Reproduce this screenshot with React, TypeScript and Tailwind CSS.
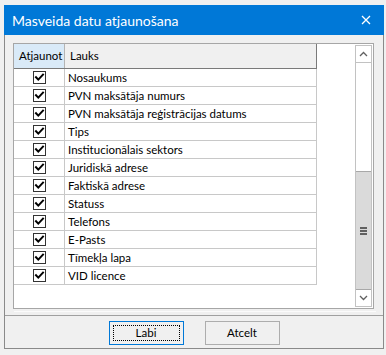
import React from "react";

const rows = [
  "Nosaukums",
  "PVN maksātāja numurs",
  "PVN maksātāja reģistrācijas datums",
  "Tips",
  "Institucionālais sektors",
  "Juridiskā adrese",
  "Faktiskā adrese",
  "Statuss",
  "Telefons",
  "E-Pasts",
  "Tīmekļa lapa",
  "VID licence",
];

function Check() {
  return (
    <div className="w-[13px] h-[13px] border border-[#333333] bg-white flex items-center justify-center">
      <svg width="11" height="11" viewBox="0 0 11 11">
        <path d="M2 5.2 L4.3 7.6 L9 2.6" fill="none" stroke="#000" strokeWidth="2" strokeLinecap="square" />
      </svg>
    </div>
  );
}

export default function App() {
  return (
    <div className="w-[386px] h-[355px] bg-[#f0f0f0] pt-[5px] pl-[4px] text-[11.5px] text-black font-['Lato','Noto_Sans',sans-serif]">
      <div className="w-[380px] h-[344px] flex flex-col">
        <div className="h-[30px] bg-[#0078d7] flex items-center justify-between pl-[8px] pr-[13px] text-white text-[14px]">
          <span className="leading-none pt-[1px]">Masveida datu atjaunošana</span>
          <svg width="10" height="10" viewBox="0 0 10 10">
            <path d="M1 1 L9 9 M9 1 L1 9" stroke="#fff" strokeWidth="1.3" />
          </svg>
        </div>
        <div className="flex-1 flex flex-col border-x border-b border-[#8a8a8a] bg-[#f0f0f0]">
          <div className="pt-[8px] pl-[8px]">
            <div className="w-[361px] h-[266px] border border-[#a6a6a6] bg-white flex">
              <div className="w-[303px] flex flex-col">
                <div className="h-[25px] flex border-b border-[#7a7a7a]">
                  <div className="w-[51px] bg-[#d9eaf8] border-r border-[#b4b4b4] flex items-center pl-[5px] whitespace-nowrap overflow-hidden">Atjaunot</div>
                  <div className="w-[252px] bg-[#f0f0f0] border-r border-[#7a7a7a] flex items-center pl-[5px]">Lauks</div>
                </div>
                {rows.map((r) => (
                  <div key={r} className="h-[18px] flex border-b border-[#c8c8c8]">
                    <div className="w-[51px] border-r border-[#c8c8c8] flex items-center justify-center pl-[1px]">
                      <Check />
                    </div>
                    <div className="w-[252px] border-r border-[#c8c8c8] flex items-center pl-[3px] leading-none">{r}</div>
                  </div>
                ))}
              </div>
              <div className="flex-1" />
              <div className="w-[17px] my-[1px] mr-[1px] border border-[#c2c2c2] flex flex-col">
                <div className="h-[17px] border-b border-[#c2c2c2] flex items-center justify-center">
                  <svg width="9" height="6" viewBox="0 0 9 6">
                    <path d="M1 5 L4.5 1.5 L8 5" fill="none" stroke="#606060" strokeWidth="1.3" />
                  </svg>
                </div>
                <div className="h-[108px] bg-white" />
                <div className="flex-1 bg-[#dadada] border-y border-[#a8a8a8] flex items-center justify-center">
                  <div className="flex flex-col gap-[1px]">
                    <div className="w-[7px] h-[2px] bg-[#606060]" />
                    <div className="w-[7px] h-[2px] bg-[#606060]" />
                    <div className="w-[7px] h-[2px] bg-[#606060]" />
                  </div>
                </div>
                <div className="h-[16px] flex items-center justify-center bg-white">
                  <svg width="9" height="6" viewBox="0 0 9 6">
                    <path d="M1 1 L4.5 4.5 L8 1" fill="none" stroke="#606060" strokeWidth="1.3" />
                  </svg>
                </div>
              </div>
            </div>
          </div>
          <div className="h-[6px] pl-[9px] pt-[2px]">
            <div className="h-[1px] w-[362px] bg-[#fbfbfb]" />
          </div>
          <div className="flex-1 border-t border-[#a0a0a0] flex justify-center gap-[21px] pt-[5px]">
            <div className="w-[75px] h-[24px] border border-[#0078d7] bg-[#f0f0f0] p-[3px]">
              <div className="w-full h-full border border-dotted border-black flex items-center justify-center leading-none">
                Labi
              </div>
            </div>
            <div className="w-[75px] h-[24px] border border-[#adadad] bg-[#f0f0f0] flex items-center justify-center leading-none">
              Atcelt
            </div>
          </div>
        </div>
      </div>
    </div>
  );
}
